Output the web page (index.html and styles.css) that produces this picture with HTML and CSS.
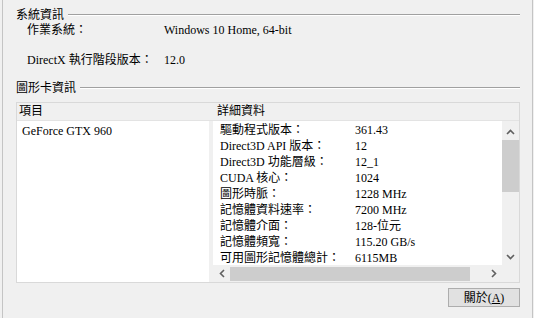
FILE: index.html
```html
<!DOCTYPE html>
<html>
<head>
    <link rel="stylesheet" href="styles.css">
</head>
<body>
    <div class="page">
        <div class="group-title">
            <span>系統資訊</span>
            <div class="etch"></div>
        </div>
        <div class="info">
            <div class="info-label">作業系統：</div>
            <div>Windows 10 Home, 64-bit</div>
            <div class="info-label">DirectX 執行階段版本：</div>
            <div>12.0</div>
        </div>

        <div class="group-title group-gpu">
            <span>圖形卡資訊</span>
            <div class="etch"></div>
        </div>

        <div class="listview">
            <div class="lv-header">
                <div class="lv-col-item">項目</div>
                <div class="lv-col-detail">詳細資料</div>
            </div>
            <div class="lv-body">
                <div class="pane-items">
                    <div class="item">GeForce GTX 960</div>
                </div>
                <div class="pane-detail">
                    <div class="detail-main">
                        <div class="detail-rows">
                            <div class="row"><span class="key">驅動程式版本：</span><span>361.43</span></div>
                            <div class="row"><span class="key">Direct3D API 版本：</span><span>12</span></div>
                            <div class="row"><span class="key">Direct3D 功能層級：</span><span>12_1</span></div>
                            <div class="row"><span class="key">CUDA 核心：</span><span>1024</span></div>
                            <div class="row"><span class="key">圖形時脈：</span><span>1228 MHz</span></div>
                            <div class="row"><span class="key">記憶體資料速率：</span><span>7200 MHz</span></div>
                            <div class="row"><span class="key">記憶體介面：</span><span>128-位元</span></div>
                            <div class="row"><span class="key">記憶體頻寬：</span><span>115.20 GB/s</span></div>
                            <div class="row"><span class="key">可用圖形記憶體總計：</span><span>6115MB</span></div>
                        </div>
                        <div class="vscroll">
                            <div class="sb-btn sb-btn-up">
                                <svg width="9" height="6" viewBox="0 0 9 6"><polyline points="1,5 4.5,1.5 8,5" fill="none" stroke="#606060" stroke-width="1.6"/></svg>
                            </div>
                            <div class="vtrack"><div class="vthumb"></div></div>
                            <div class="sb-btn sb-btn-down">
                                <svg width="9" height="6" viewBox="0 0 9 6"><polyline points="1,1 4.5,4.5 8,1" fill="none" stroke="#606060" stroke-width="1.6"/></svg>
                            </div>
                        </div>
                    </div>
                    <div class="hscroll">
                        <div class="sb-btn sb-btn-left">
                            <svg width="6" height="9" viewBox="0 0 6 9"><polyline points="5,1 1.5,4.5 5,8" fill="none" stroke="#606060" stroke-width="1.6"/></svg>
                        </div>
                        <div class="htrack"><div class="hthumb"></div></div>
                        <div class="sb-btn sb-btn-right">
                            <svg width="6" height="9" viewBox="0 0 6 9"><polyline points="1,1 4.5,4.5 1,8" fill="none" stroke="#606060" stroke-width="1.6"/></svg>
                        </div>
                        <div class="sb-corner"></div>
                    </div>
                </div>
            </div>
        </div>

        <div class="actions">
            <button class="btn" type="button">關於(<u>A</u>)</button>
        </div>
    </div>
</body>
</html>
```

FILE: styles.css
```css
html, body {
    margin: 0;
    padding: 0;
    background: #f0f0f0;
}
body {
    width: 534px;
    height: 318px;
    overflow: hidden;
    font-family: "Liberation Serif", "Noto Sans CJK TC", serif;
    font-size: 12px;
    line-height: 16px;
    color: #000;
}
.page {
    margin-left: 2px;
    width: 504px;
    height: 318px;
    padding: 0 12px 0 13px;
    border-left: 1px solid #c4c4c4;
    border-right: 1px solid #c4c4c4;
}
.group-title {
    display: flex;
    align-items: center;
    height: 16px;
    padding-top: 6px;
}
.group-title span {
    font-family: "Noto Sans CJK TC", sans-serif;
}
.etch {
    flex: 1;
    margin-left: 4px;
    margin-top: 2px;
    border-top: 1px solid #a0a0a0;
    border-bottom: 1px solid #ffffff;
}
.info {
    display: grid;
    grid-template-columns: 137px auto;
    row-gap: 14px;
    padding-left: 11px;
}
.group-gpu {
    padding-top: 11px;
}
.listview {
    margin-top: 7px;
    height: 179px;
    border: 1px solid #d9d9d9;
}
.lv-header {
    display: flex;
    height: 17px;
    border-bottom: 1px solid #e3e3e3;
}
.lv-col-item {
    width: 194px;
    padding-left: 2px;
}
.lv-col-detail {
    padding-left: 4px;
}
.lv-body {
    display: flex;
    height: 161px;
}
.pane-items {
    width: 192px;
    background: #fff;
}
.item {
    padding: 2px 0 0 5px;
}
.pane-detail {
    margin-left: 4px;
    flex: 1;
    display: flex;
    flex-direction: column;
}
.detail-main {
    display: flex;
    height: 144px;
}
.detail-rows {
    flex: 1;
    background: #fff;
    padding: 1px 0 0 7px;
    overflow: hidden;
    white-space: nowrap;
}
.row {
    display: flex;
    height: 16px;
}
.key {
    width: 135px;
}
.vscroll {
    width: 17px;
    display: flex;
    flex-direction: column;
    background: #f0f0f0;
}
.sb-btn {
    display: flex;
    align-items: center;
    justify-content: center;
}
.sb-btn-up {
    height: 19px;
    padding-top: 2px;
    box-sizing: border-box;
}
.sb-btn-down {
    height: 17px;
}
.vtrack {
    flex: 1;
}
.vthumb {
    height: 52px;
    background: #cdcdcd;
}
.hscroll {
    display: flex;
    height: 17px;
    background: #f0f0f0;
}
.sb-btn-left,
.sb-btn-right {
    width: 17px;
}
.htrack {
    flex: 1;
    padding-top: 2px;
}
.hthumb {
    width: 240px;
    height: 14px;
    background: #cdcdcd;
}
.sb-corner {
    width: 17px;
}
.actions {
    display: flex;
    justify-content: flex-end;
    padding-top: 5px;
}
.btn {
    width: 72px;
    height: 19px;
    padding: 0;
    background: #e1e1e1;
    border: 1px solid #adadad;
    font-family: "Liberation Serif", "Noto Sans CJK TC", serif;
    font-size: 12px;
    line-height: 16px;
    color: #000;
}
```
